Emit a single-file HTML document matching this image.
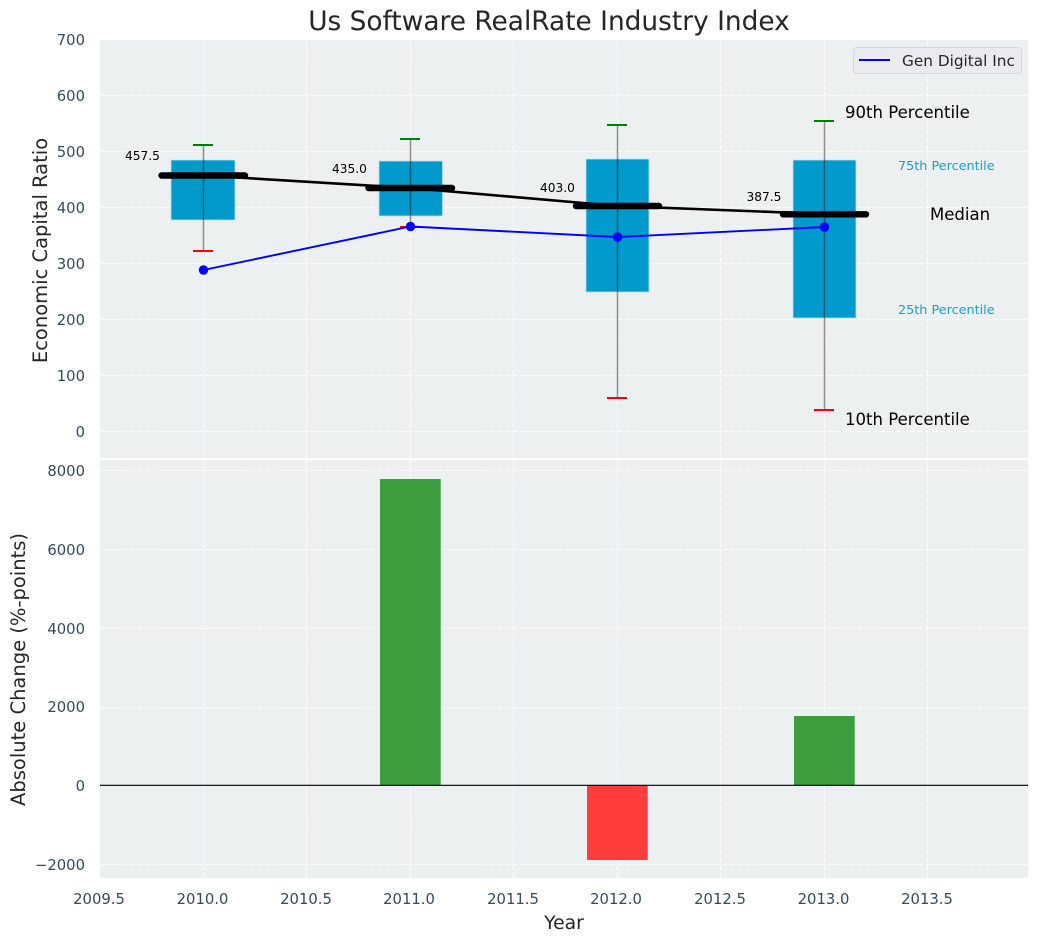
<!DOCTYPE html>
<html><head><meta charset="utf-8"><style>
html,body{margin:0;padding:0;background:#fff;width:1039px;height:942px;overflow:hidden}
svg{display:block}
text{font-family:"DejaVu Sans",sans-serif}
.t{font-size:14.8px;fill:#34495e}
.g{stroke:#fff;stroke-width:1.1;stroke-dasharray:5.2 2.3;opacity:.85}
.a{fill:#000;font-size:16.55px}
.s{fill:#19a0cf;font-size:12.8px}
.v{fill:#000;font-size:12.200px}
.w{stroke:#000;stroke-opacity:.42;stroke-width:1.5}
.box{fill:#009ACD;stroke:#bfe3ef;stroke-width:.8}
</style></head><body>
<svg width="1039" height="942" viewBox="0 0 1039 942" xmlns="http://www.w3.org/2000/svg">
<rect x="100" y="40" width="928" height="418" fill="#ecf0f1"/>
<rect x="100" y="460" width="928" height="418" fill="#ecf0f1"/>
<!-- grids top -->
<g class="g">
<path d="M100 95.5H1028M100 151.5H1028M100 207.5H1028M100 263.5H1028M100 319.5H1028M100 375.5H1028M100 431.5H1028"/>
<path d="M203.5 40V458M306.5 40V458M410.5 40V458M513.5 40V458M617.5 40V458M720.5 40V458M824.5 40V458M927.5 40V458"/>
<path d="M100 470.5H1028M100 549.5H1028M100 628.5H1028M100 707.5H1028M100 864.5H1028"/>
<path d="M203.5 460V878M306.5 460V878M410.5 460V878M513.5 460V878M617.5 460V878M720.5 460V878M824.5 460V878M927.5 460V878"/>
</g>
<!-- boxes -->
<rect class="box" x="171" y="160" width="64" height="60"/>
<rect class="box" x="379" y="161" width="63.5" height="55"/>
<rect class="box" x="586" y="159" width="63" height="133"/>
<rect class="box" x="793" y="160" width="63" height="158"/>
<!-- whiskers -->
<path class="w" d="M203.5 145V251M410.5 139V227M617.5 125V398M824.5 121V410"/>
<g stroke-width="2" fill="none">
<path stroke="#008000" d="M193 145H213M400 139H420M607 125H627M814 121H834"/>
<path stroke="#f00" d="M193 251H213M400 227H420M607 398H627M814 410H834"/>
</g>
<!-- median line -->
<path d="M203.500 175.500L410.500 188L617.500 206L824.500 214" fill="none" stroke="#000" stroke-width="2.600"/>
<g stroke="#000" stroke-width="6.400" stroke-linecap="round">
<path d="M161.500 175.500H245M368.500 188H452M576 206H659M783 214.300H866"/>
</g>
<!-- blue line -->
<path d="M203.500 270L410.500 226.500L617.500 237L824.500 227" fill="none" stroke="#00f" stroke-width="1.900"/>
<g fill="#00f"><circle cx="203.500" cy="270" r="4.700"/><circle cx="410.500" cy="226.500" r="4.700"/><circle cx="617.500" cy="237" r="4.700"/><circle cx="824.500" cy="227" r="4.700"/></g>
<!-- values -->
<text class="v" x="125" y="160">457.5</text>
<text class="v" x="332" y="173">435.0</text>
<text class="v" x="540" y="192">403.0</text>
<text class="v" x="746.500" y="201">387.5</text>
<!-- annotations -->
<text class="a" x="845" y="118">90th Percentile</text>
<text class="a" x="930" y="220">Median</text>
<text class="a" x="845" y="425">10th Percentile</text>
<text class="s" x="898" y="170">75th Percentile</text>
<text class="s" x="898" y="314">25th Percentile</text>
<!-- legend -->
<rect x="853.500" y="47.500" width="168" height="26" rx="3" fill="#eaebf0" stroke="#d6d7da" stroke-width="1"/>
<path d="M859 60H890" stroke="#00f" stroke-width="1.900"/>
<text x="902" y="66" font-size="15.300" fill="#262626">Gen Digital Inc</text>
<!-- bars -->
<rect x="380" y="479" width="60.700" height="306" fill="#3d9e40"/>
<rect x="587" y="785" width="60.700" height="75" fill="#ff3d3d"/>
<rect x="794" y="716" width="60.700" height="69" fill="#3d9e40"/>
<path d="M100 785.300H1028" stroke="#000" stroke-width="1.200"/>
<!-- y ticks top -->
<g class="t" text-anchor="end">
<text x="85" y="45">700</text><text x="85" y="101">600</text><text x="85" y="157">500</text><text x="85" y="213">400</text><text x="85" y="269">300</text><text x="85" y="325">200</text><text x="85" y="381">100</text><text x="85" y="437">0</text>
<text x="85" y="476">8000</text><text x="85" y="555">6000</text><text x="85" y="634">4000</text><text x="85" y="712">2000</text><text x="85" y="791">0</text><text x="85" y="870">−2000</text>
</g>
<!-- x ticks -->
<g class="t" text-anchor="middle">
<text x="99" y="904">2009.5</text><text x="202.500" y="904">2010.0</text><text x="306" y="904">2010.5</text><text x="409" y="904">2011.0</text><text x="513" y="904">2011.5</text><text x="616" y="904">2012.0</text><text x="720" y="904">2012.5</text><text x="823.500" y="904">2013.0</text><text x="927" y="904">2013.5</text>
</g>
<!-- labels -->
<text x="549" y="30" font-size="26.400" fill="#262626" text-anchor="middle">Us Software RealRate Industry Index</text>
<text x="564" y="929" font-size="18.800" fill="#262626" text-anchor="middle">Year</text>
<text transform="translate(47 250.500) rotate(-90)" font-size="19.500" fill="#262626" text-anchor="middle">Economic Capital Ratio</text>
<text transform="translate(25 669.500) rotate(-90)" font-size="19.500" fill="#262626" text-anchor="middle">Absolute Change (%-points)</text>
</svg>
</body></html>
